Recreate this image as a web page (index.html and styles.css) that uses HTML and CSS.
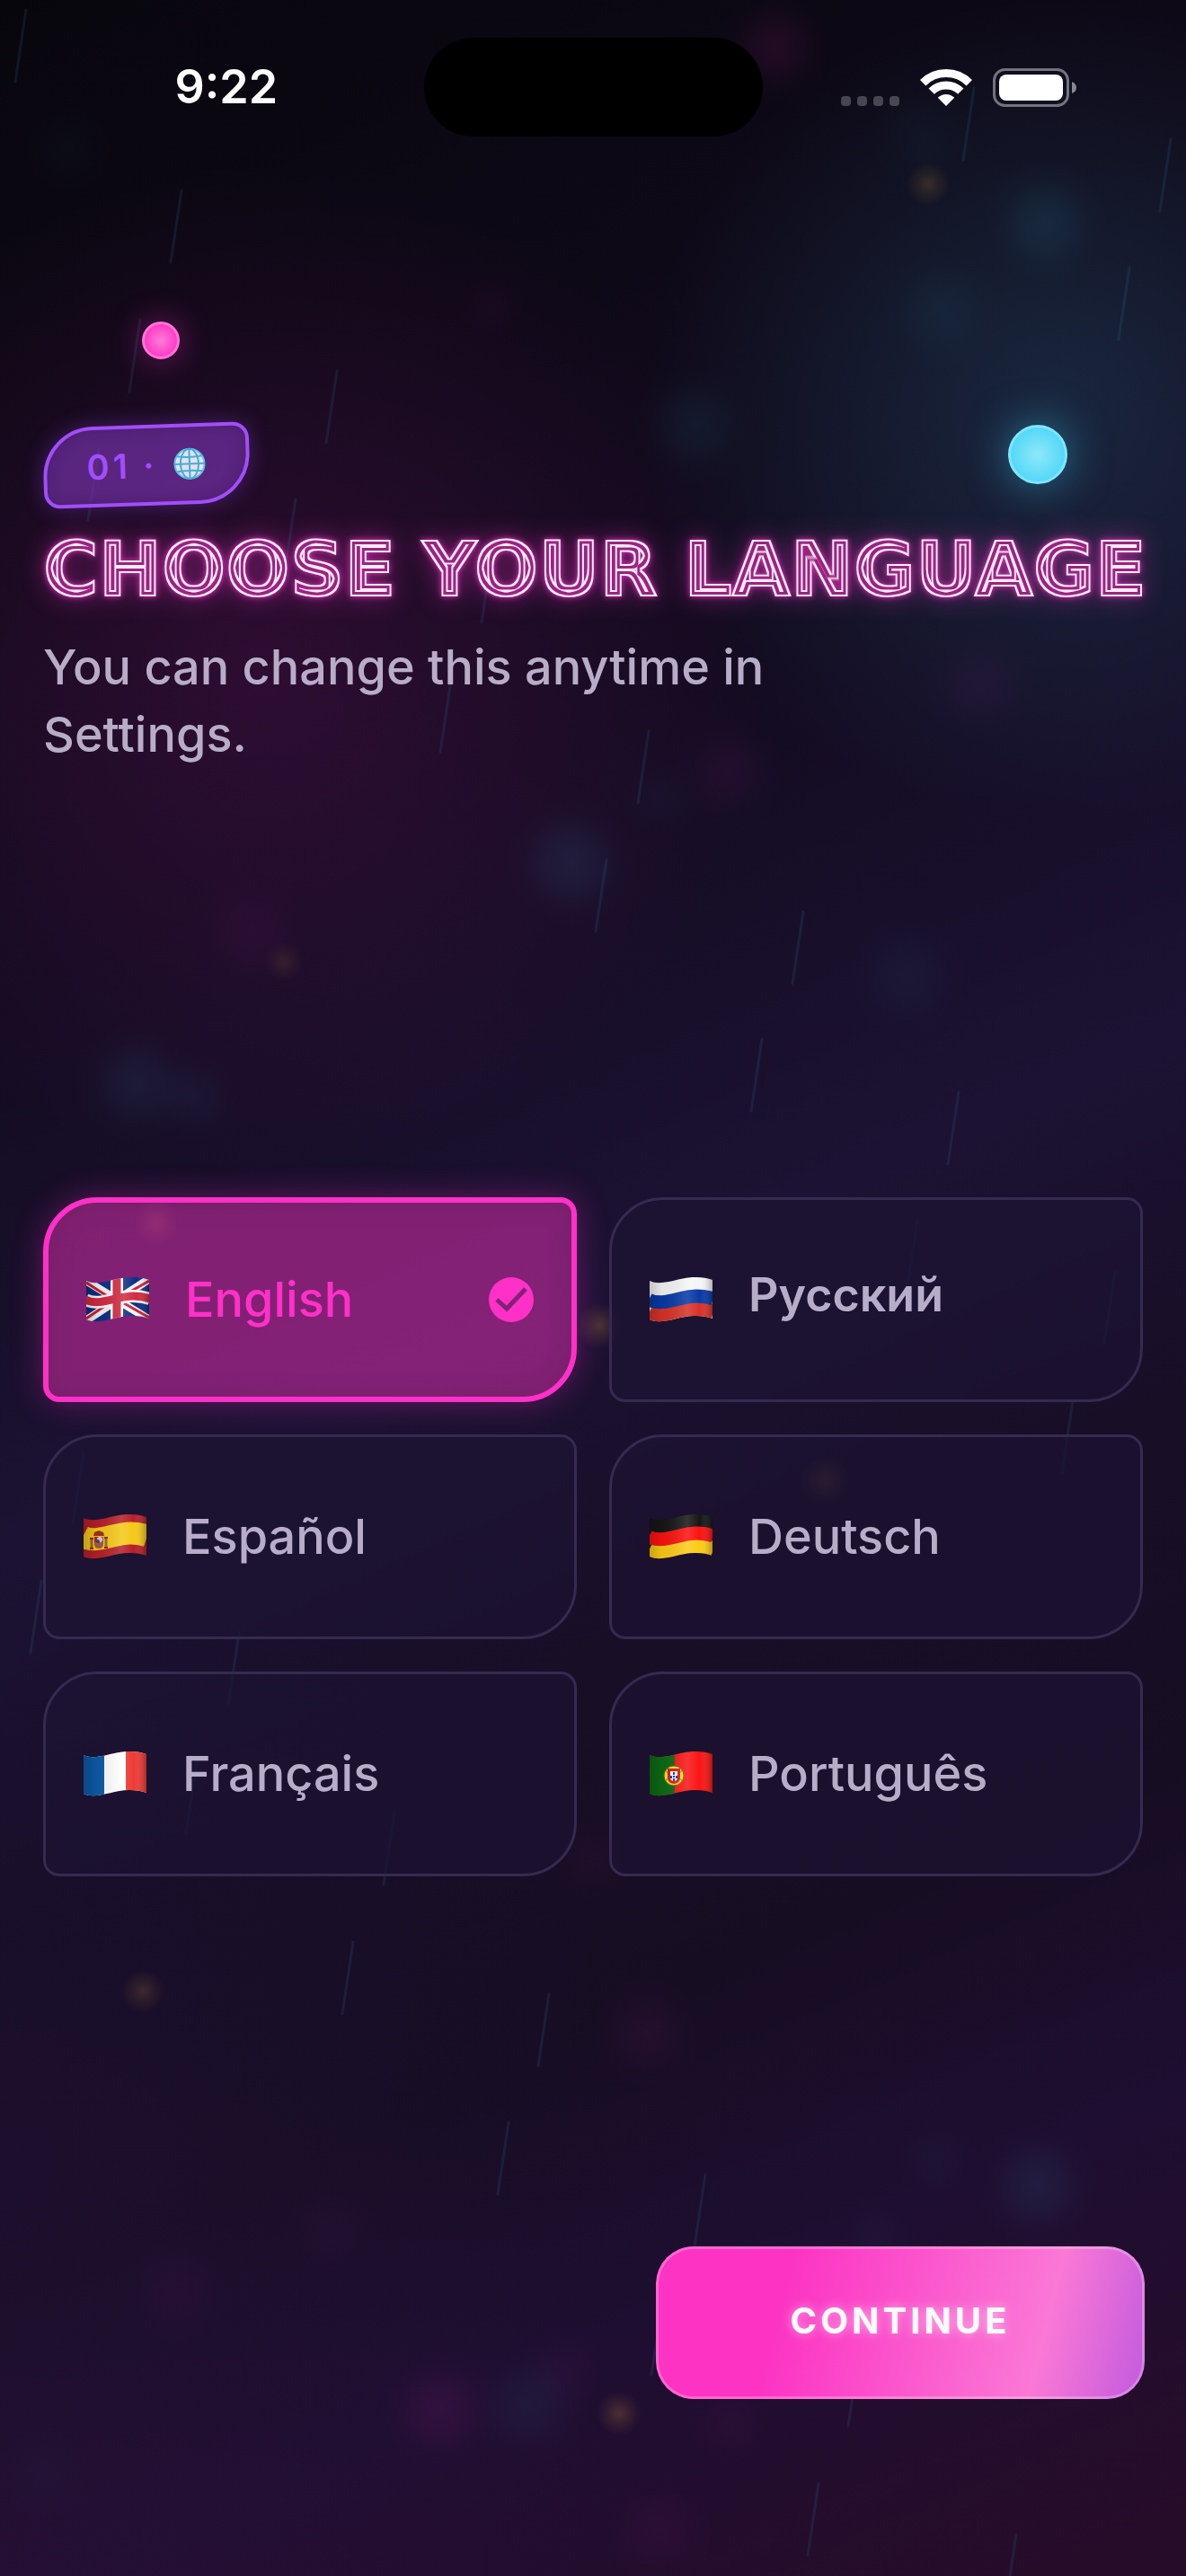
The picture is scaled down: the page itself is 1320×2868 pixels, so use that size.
FILE: index.html
```html
<!DOCTYPE html>
<html lang="en">
<head>
<meta charset="utf-8">
<meta name="viewport" content="width=device-width, initial-scale=1">
<title>Choose your language</title>
<link rel="stylesheet" href="styles.css">
</head>
<body>
<svg class="defs" width="0" height="0" aria-hidden="true">
  <defs>
    <!-- Concentric neon tubes: nested insets of the glyph shape -->
    <filter id="tubes" x="-2%" y="-10%" width="104%" height="120%" color-interpolation-filters="sRGB">
      <feFlood flood-color="#9c2382" result="tint"/>
      <feComposite in="tint" in2="SourceAlpha" operator="in" result="base"/>
      <feMorphology in="SourceGraphic" operator="erode" radius="2" result="e2"/>
      <feMorphology in="SourceGraphic" operator="erode" radius="5" result="e5"/>
      <feMorphology in="SourceGraphic" operator="erode" radius="7" result="e7"/>
      <feComposite in="SourceGraphic" in2="e2" operator="out" result="outer"/>
      <feComposite in="e5" in2="e7" operator="out" result="inner"/>
      <feMerge>
        <feMergeNode in="base"/>
        <feMergeNode in="outer"/>
        <feMergeNode in="inner"/>
      </feMerge>
    </filter>
    <clipPath id="wave"><path d="M0 4C14 11 34-1 52 0Q62 0 70 3V46Q62 43 52 43C34 42 14 54 0 47Z"/></clipPath>
    <linearGradient id="sheen" x1="0" x2="1" y1="0" y2="0">
      <stop offset="0" stop-color="#000" stop-opacity=".2"/>
      <stop offset=".2" stop-color="#000" stop-opacity=".06"/>
      <stop offset=".6" stop-color="#fff" stop-opacity=".14"/>
      <stop offset=".8" stop-color="#fff" stop-opacity="0"/>
      <stop offset="1" stop-color="#000" stop-opacity=".28"/>
    </linearGradient>
    <radialGradient id="pink"><stop offset="0" stop-color="#ff30c8" stop-opacity=".09"/><stop offset=".4" stop-color="#ff30c8" stop-opacity=".055"/><stop offset=".7" stop-color="#ff30c8" stop-opacity=".015"/><stop offset="1" stop-color="#ff30c8" stop-opacity="0"/></radialGradient>
    <radialGradient id="cyan"><stop offset="0" stop-color="#3cc8f5" stop-opacity=".09"/><stop offset=".4" stop-color="#3cc8f5" stop-opacity=".055"/><stop offset=".7" stop-color="#3cc8f5" stop-opacity=".015"/><stop offset="1" stop-color="#3cc8f5" stop-opacity="0"/></radialGradient>
    <radialGradient id="amber"><stop offset="0" stop-color="#ffb43c" stop-opacity=".2"/><stop offset=".5" stop-color="#ffb43c" stop-opacity=".09"/><stop offset="1" stop-color="#ffb43c" stop-opacity="0"/></radialGradient>
  </defs>
</svg>

<div class="screen">
  <svg class="backdrop" viewBox="0 0 1320 2868" preserveAspectRatio="xMidYMid slice" aria-hidden="true">
    <g fill="url(#pink)">
      <circle cx="863" cy="52" r="65"/><circle cx="548" cy="342" r="40" opacity=".3"/><circle cx="812" cy="860" r="65" opacity=".6"/>
      <circle cx="1090" cy="764" r="65" opacity=".5"/><circle cx="280" cy="1038" r="65" opacity=".5"/><circle cx="720" cy="2263" r="65" opacity=".6"/>
      <circle cx="490" cy="2682" r="70" opacity=".9"/><circle cx="733" cy="2817" r="65" opacity=".5"/><circle cx="196" cy="2550" r="65" opacity=".4"/>
      <circle cx="369" cy="2483" r="60" opacity=".3"/><circle cx="813" cy="2697" r="50" opacity=".4"/><circle cx="660" cy="2070" r="50" opacity=".4"/>
      <circle cx="630" cy="2640" r="55" opacity=".4"/>
    </g>
    <g fill="url(#cyan)">
      <circle cx="1163" cy="247" r="70"/><circle cx="1047" cy="345" r="70" opacity=".5"/><circle cx="1025" cy="150" r="65" opacity=".3"/>
      <circle cx="773" cy="473" r="70" opacity=".7"/><circle cx="636" cy="960" r="75"/><circle cx="735" cy="890" r="50" opacity=".3"/>
      <circle cx="1009" cy="1086" r="70" opacity=".5"/><circle cx="152" cy="1206" r="70" opacity=".8"/><circle cx="216" cy="1221" r="55" opacity=".5"/>
      <circle cx="1155" cy="2433" r="70" opacity=".9"/><circle cx="1042" cy="2406" r="50" opacity=".3"/><circle cx="975" cy="2490" r="50" opacity=".3"/>
      <circle cx="589" cy="2678" r="70" opacity=".6"/><circle cx="48" cy="2755" r="60" opacity=".2"/><circle cx="75" cy="165" r="55" opacity=".3"/>
    </g>
    <g fill="url(#amber)">
      <circle cx="1033" cy="205" r="24" opacity=".8"/><circle cx="316" cy="1071" r="22" opacity=".5"/><circle cx="667" cy="1476" r="26"/>
      <circle cx="174" cy="1361" r="26"/><circle cx="918" cy="1648" r="28"/><circle cx="159" cy="2217" r="24" opacity=".8"/>
      <circle cx="689" cy="2687" r="25"/>
    </g>
    <path class="rain" d="M29 11l-12 80M202 212l-12 80M156 356l-12 80M375 413l-12 80M1084 98l-12 80M1303 155l-12 80M1257 298l-12 80M329 556l-12 80M548 613l-12 80M502 757l-12 80M110 499l-12 80M722 814l-12 80M675 957l-12 80M894 1015l-12 80M848 1157l-12 80M1067 1216l-12 80M1021 1359l-12 80M1241 1416l-12 80M1194 1560l-12 80M93 1617l-12 80M46 1760l-12 80M266 1818l-12 80M219 1961l-12 80M439 2018l-12 80M393 2162l-12 80M611 2220l-12 80M566 2363l-12 80M785 2421l-12 80M737 2564l-12 80M956 2621l-12 80M911 2765l-12 80M1131 2822l-12 80"/>
  </svg>
  <span class="orb orb-pink"></span>
  <span class="orb orb-cyan"></span>

  <header class="status">
    <time class="clock">9:22</time>
    <span class="island"></span>
    <span class="indicators">
      <svg width="65" height="42" viewBox="0 0 65 42" fill="#fff" fill-opacity=".24" aria-hidden="true">
        <rect x="0" y="31" width="11" height="11" rx="4"/><rect x="18" y="31" width="11" height="11" rx="4"/><rect x="36" y="31" width="11" height="11" rx="4"/><rect x="54" y="31" width="11" height="11" rx="4"/>
      </svg>
      <svg class="wifi" width="58" height="42" viewBox="0 0 58 42" fill="none" stroke="#fff" stroke-width="9" role="img" aria-label="Wi-Fi">
        <path d="M3.2 16.2A36.5 36.5 0 0 1 54.8 16.2M12.7 25.7A23 23 0 0 1 45.3 25.7"/>
        <path d="M29 42 19.8 32.8A13 13 0 0 1 38.2 32.8Z" fill="#fff" stroke="none"/>
      </svg>
      <svg width="93" height="43" viewBox="0 0 93 43" role="img" aria-label="Battery full">
        <rect x="1.5" y="1.5" width="82" height="40" rx="12" fill="none" stroke="#fff" stroke-opacity=".42" stroke-width="3"/>
        <rect x="7" y="7" width="71" height="29" rx="8" fill="#fff"/>
        <path d="M88 15Q93 17 93 21.500T88 28Z" fill="#fff" fill-opacity=".5"/>
      </svg>
    </span>
  </header>

  <main class="content">
    <section class="hero">
      <p class="badge">
        <span>01 ·</span>
        <svg width="36" height="36" viewBox="0 0 36 36" fill="none" stroke="#45afd0" stroke-width="2" aria-hidden="true">
          <circle cx="18" cy="18" r="16.500" fill="#e6e0f0" stroke="#5cc8e4"/>
          <path d="M18 1V35M1 18H35M4 9.500Q18 11.500 32 9.500M4 26.500Q18 24.500 32 26.500"/>
          <ellipse cx="18" cy="18" rx="10" ry="16.500"/>
        </svg>
      </p>
      <h1 class="title">CHOOSE YOUR LANGUAGE</h1>
      <p class="subtitle">You can change this anytime in Settings.</p>
    </section>

    <form class="picker" id="language-form">
      <fieldset class="languages" aria-label="Language">
        <label class="language">
          <input class="choice" type="radio" name="language" value="en" checked>
          <svg class="flag" viewBox="0 0 70 50" aria-hidden="true"><g clip-path="url(#wave)">
            <rect width="70" height="50" fill="#0b2f85"/>
            <path d="M0 4 70 47M0 48 70 2" stroke="#f4f4f6" stroke-width="9"/>
            <path d="M0 6 28 24M42 29 70 45M0 46 28 27M42 20 70 4" stroke="#d01f36" stroke-width="3"/>
            <path d="M34 0V50" stroke="#fff" stroke-width="14"/>
            <path d="M-1 25C14 33 34 21 52 21Q62 21 71 24" fill="none" stroke="#fff" stroke-width="14"/>
            <path d="M34 0V50" stroke="#d42a40" stroke-width="9"/>
            <path d="M-1 25C14 33 34 21 52 21Q62 21 71 24" fill="none" stroke="#d42a40" stroke-width="9"/>
            <rect width="70" height="50" fill="url(#sheen)"/></g></svg>
          <span class="name">English</span>
          <svg class="check" viewBox="0 0 50 50" aria-hidden="true"><circle cx="25" cy="25" r="25" fill="#ff30c8"/><path d="M9 25 20 35 41 13" fill="none" stroke="#832275" stroke-width="5"/></svg>
        </label>

        <label class="language">
          <input class="choice" type="radio" name="language" value="ru">
          <svg class="flag" viewBox="0 0 70 50" aria-hidden="true"><g clip-path="url(#wave)">
            <rect width="70" height="50" fill="#f5f5f5"/>
            <path d="M-1 40C14 48 34 36 52 36Q62 36 71 39" fill="none" stroke="#d83228" stroke-width="18"/>
            <path d="M-1 25C14 33 34 21 52 21Q62 21 71 24" fill="none" stroke="#0839a6" stroke-width="15"/>
            <rect width="70" height="50" fill="url(#sheen)"/></g></svg>
          <span class="name name-strong" lang="ru">Русский</span>
        </label>

        <label class="language">
          <input class="choice" type="radio" name="language" value="es">
          <svg class="flag" viewBox="0 0 70 50" aria-hidden="true"><g clip-path="url(#wave)">
            <rect width="70" height="50" fill="#b61f29"/>
            <path d="M-1 25C14 33 34 21 52 21Q62 21 71 24" fill="none" stroke="#f5c818" stroke-width="25"/>
            <path d="M9 26V38M25 25V37" stroke="#9a6a35" stroke-width="3"/><path d="M7 27H11M23 26H27M7 38H11M23 37H27" stroke="#8a2a25" stroke-width="2"/>
            <path d="M12 25H22V33Q22 38 17 38T12 33Z" fill="#a85a38"/><path d="M12 25H17V31H12Z" fill="#b61f29"/><circle cx="18" cy="28" r="3" fill="#e8c8e0"/><circle cx="16" cy="30" r="2" fill="#24489a"/>
            <path d="M11 24 12 20 17 18 22 20 23 24Z" fill="#a0301f"/>
            <rect width="70" height="50" fill="url(#sheen)"/></g></svg>
          <span class="name" lang="es">Español</span>
        </label>

        <label class="language">
          <input class="choice" type="radio" name="language" value="de">
          <svg class="flag" viewBox="0 0 70 50" aria-hidden="true"><g clip-path="url(#wave)">
            <rect width="70" height="50" fill="#161616"/>
            <path d="M-1 40C14 48 34 36 52 36Q62 36 71 39" fill="none" stroke="#fccb16" stroke-width="18"/>
            <path d="M-1 25C14 33 34 21 52 21Q62 21 71 24" fill="none" stroke="#fb1210" stroke-width="15"/>
            <rect width="70" height="50" fill="url(#sheen)"/></g></svg>
          <span class="name" lang="de">Deutsch</span>
        </label>

        <label class="language">
          <input class="choice" type="radio" name="language" value="fr">
          <svg class="flag" viewBox="0 0 70 50" aria-hidden="true"><g clip-path="url(#wave)">
            <rect width="70" height="50" fill="#fff"/><rect width="23" height="50" fill="#0b5aa8"/><rect x="47" width="23" height="50" fill="#ee3a34"/>
            <rect width="70" height="50" fill="url(#sheen)"/></g></svg>
          <span class="name" lang="fr">Français</span>
        </label>

        <label class="language">
          <input class="choice" type="radio" name="language" value="pt">
          <svg class="flag" viewBox="0 0 70 50" aria-hidden="true"><g clip-path="url(#wave)">
            <rect width="70" height="50" fill="#fb1414"/><rect width="28" height="50" fill="#0b6b14"/>
            <circle cx="27" cy="27" r="11" fill="#f7e21c" stroke="#6a6a10" stroke-width="1"/><path d="M18 22Q27 30 36 22M18 32Q27 24 36 32" fill="none" stroke="#8a8410" stroke-width="1"/>
            <path d="M20 19H34V29Q34 35 27 36Q20 35 20 29Z" fill="#e01a20"/><path d="M23 22H31V29Q31 33 27 33T23 29Z" fill="#fff"/>
            <path d="M27 23V26M27 30V33M24 27V30M30 27V30M27 27V29" stroke="#1a3fb0" stroke-width="2"/>
            <rect width="70" height="50" fill="url(#sheen)"/></g></svg>
          <span class="name" lang="pt">Português</span>
        </label>
      </fieldset>
    </form>
  </main>

  <footer class="actions">
    <button class="continue" type="submit" form="language-form">CONTINUE</button>
  </footer>
</div>
</body>
</html>
```
FILE: styles.css
```css
* { box-sizing: border-box; }

body {
  margin: 0;
  background: #160d24;
  color: #b8adc9;
  font-family: Inter, "Liberation Sans", sans-serif;
}

p, h1 { margin: 0; }

.defs { position: absolute; }

.screen {
  position: relative;
  display: flex;
  flex-direction: column;
  min-height: 100vh;
  overflow: hidden;
  background:
    radial-gradient(circle at 89% 16%, #2b6a8a4c, transparent 460px),
    radial-gradient(circle at 22% 26%, #9a188436, transparent 560px),
    radial-gradient(circle at 0% 84%, #20124044, transparent 700px),
    radial-gradient(circle at 0% 100%, #3c123c44, transparent 700px),
    linear-gradient(156deg, #08060d 0%, #130b20 32%, #1c1233 50%, #180e26 62%, #170d23 74%, #1e0e31 84%, #270c2a 98%);
}

.backdrop {
  position: absolute;
  inset: 0;
  width: 100%;
  height: 100%;
}

.rain {
  fill: none;
  stroke: #3ca0c8;
  stroke-opacity: .12;
  stroke-width: 3;
  stroke-linecap: round;
}

.orb {
  position: absolute;
  border-radius: 50%;
}

.orb-pink {
  top: 358px;
  left: 158px;
  width: 42px;
  height: 42px;
  border: 3px solid #ff74d8;
  background: radial-gradient(#ff7cd6, #ff3cc8 70%);
  box-shadow: 0 0 36px #ff30c870;
}

.orb-cyan {
  top: 473px;
  right: 132px;
  width: 66px;
  height: 66px;
  border: 3px solid #7ee6fc;
  background: radial-gradient(#8ee8fa, #55d8f7 70%);
  box-shadow: 0 0 48px #3cc8f580;
}

.status {
  position: relative;
  display: grid;
  grid-template-columns: 1fr 377px 1fr;
  align-items: center;
  margin-top: 42px;
}

.clock {
  padding-left: 32px;
  color: #fff;
  font-size: 52px;
  font-weight: 600;
  line-height: 64px;
  text-align: center;
}

.island {
  height: 110px;
  border-radius: 55px;
  background: #000;
}

.indicators {
  display: flex;
  justify-content: flex-end;
  align-items: center;
  gap: 23px;
  padding-right: 122px;
}

.content {
  position: relative;
  display: flex;
  flex: 1;
  flex-direction: column;
  padding: 321px 48px 0;
}

.hero {
  display: flex;
  flex-direction: column;
  align-items: flex-start;
  gap: 27px;
  padding-bottom: 66px;
}

.badge {
  display: flex;
  justify-content: center;
  align-items: center;
  gap: 18px;
  width: 230px;
  height: 90px;
  border: 4px solid #a24dfb;
  border-radius: 56px 18px;
  background: #7a34b0a8;
  box-shadow: 0 0 24px #a24dfb50, inset 0 0 16px #30104050;
  color: #a24dfb;
  font-size: 38px;
  font-weight: 600;
  letter-spacing: 4px;
  transform: rotate(-2deg);
}

.title {
  color: #f8ecf9;
  font-family: "DejaVu Sans", sans-serif;
  font-size: 84px;
  font-weight: 700;
  line-height: 88px;
  white-space: nowrap;
  -webkit-text-stroke: 2px #f8ecf9;
  filter: url(#tubes) drop-shadow(0 0 3px #e030b8) drop-shadow(0 0 14px #e030b870);
}

.subtitle {
  max-width: 900px;
  font-size: 54px;
  font-weight: 500;
  line-height: 75px;
}

.picker { margin: auto 0; }

.languages {
  display: grid;
  grid-template-columns: 1fr 1fr;
  gap: 36px;
  margin: 0;
  padding: 0;
  border: 0;
}

.language {
  position: relative;
  display: flex;
  align-items: center;
  gap: 40px;
  height: 228px;
  padding: 0 42px;
  border: 3px solid #362a50;
  border-radius: 60px 18px;
  background: #1d1333b0;
  font-size: 54px;
  font-weight: 500;
  line-height: 64px;
}

.language:has(:checked) {
  border: 6px solid #ff30c8;
  background: #c82da499;
  box-shadow: 0 0 36px #ff30c850, inset 0 0 24px #60205060;
  color: #ff30c8;
}

/* The whole card is the radio's hit area */
.choice {
  position: absolute;
  inset: 0;
  margin: 0;
  appearance: none;
  border-radius: inherit;
  cursor: pointer;
}

.flag {
  width: 70px;
  height: 50px;
}

.name-strong {
  padding-bottom: 10px;
  font-size: 52px;
  font-weight: 600;
}

.check {
  width: 50px;
  height: 50px;
  margin-left: auto;
}

.actions {
  position: relative;
  display: flex;
  justify-content: flex-end;
  padding: 0 46px 197px;
}

.continue {
  width: 544px;
  height: 170px;
  padding-bottom: 6px;
  border: 3px solid #ffffff40;
  border-radius: 42px;
  background: linear-gradient(104deg, #fc33c3 26%, #fa78d6 78%, #c25ade 100%) border-box;
  color: #fafafa;
  font-family: inherit;
  font-size: 40px;
  font-weight: 700;
  letter-spacing: 4px;
  text-shadow: 0 0 12px #ffffff90;
}
```
